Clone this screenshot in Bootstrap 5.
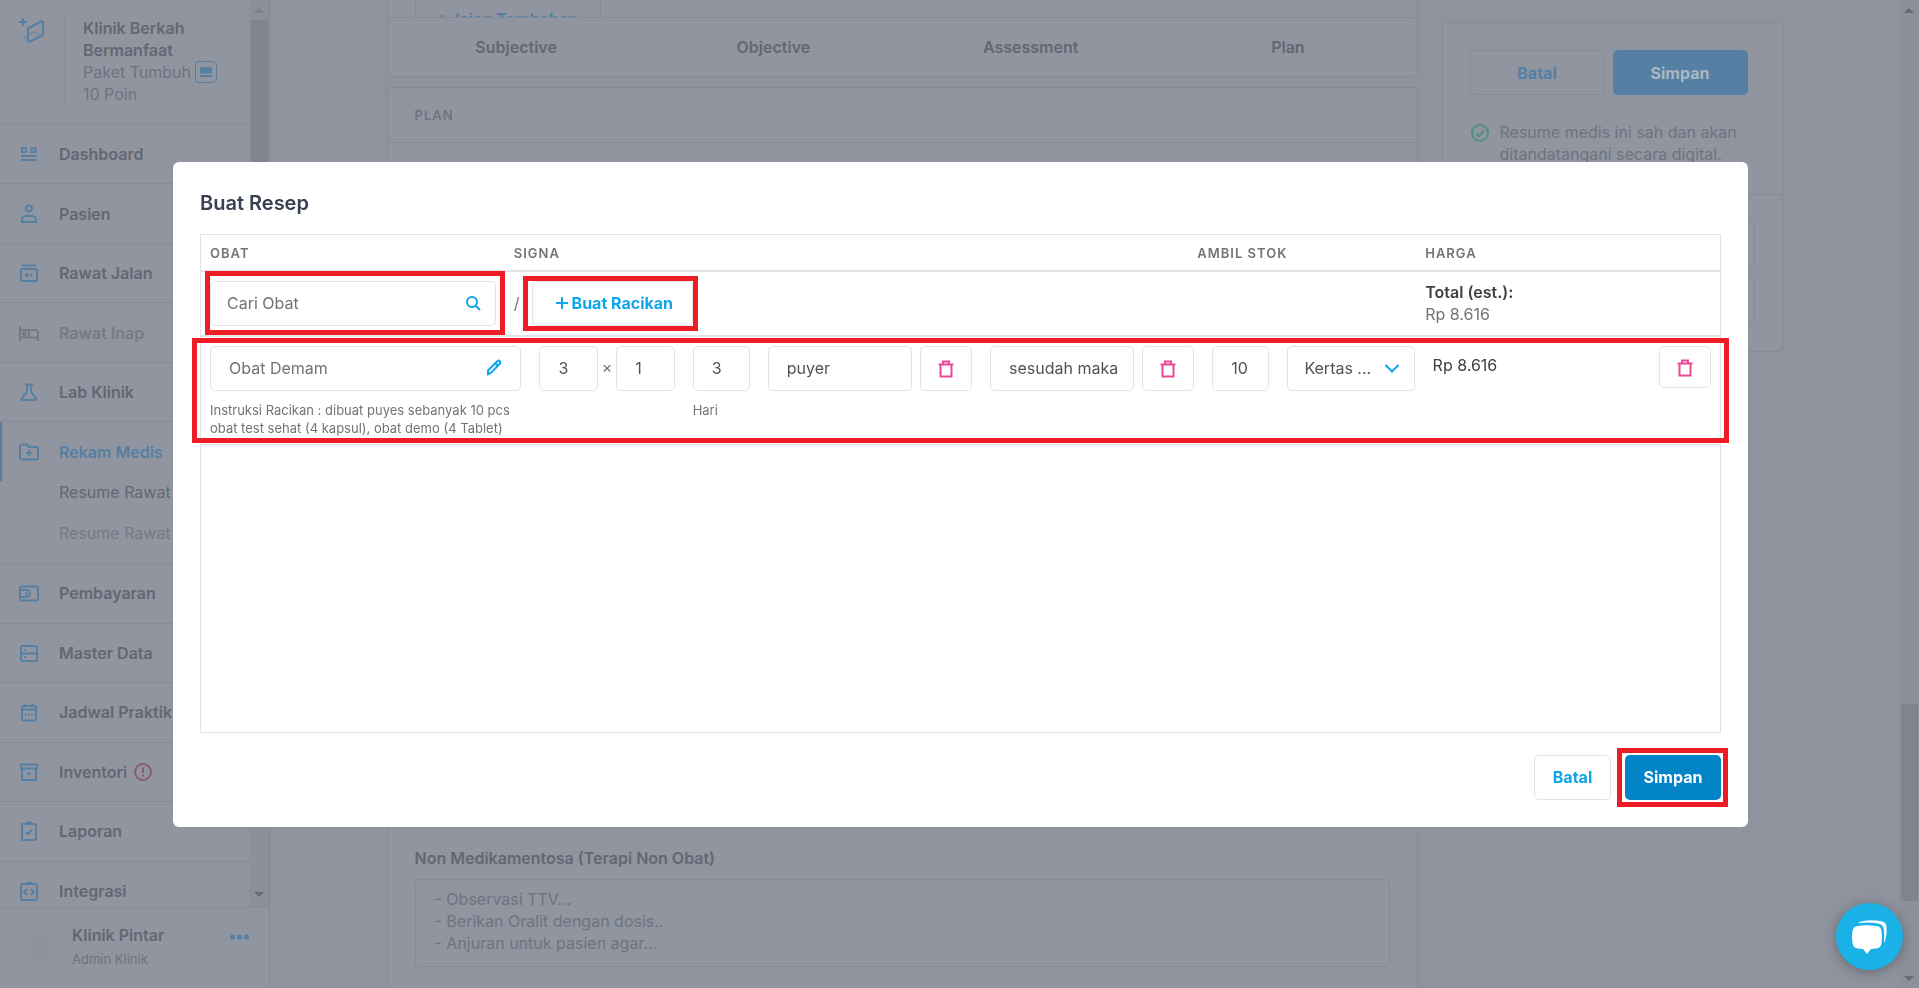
<!DOCTYPE html>
<html lang="id">
<head>
<meta charset="utf-8">
<meta name="viewport" content="width=device-width, initial-scale=1">
<title>Buat Resep</title>
<link href="https://cdn.jsdelivr.net/npm/bootstrap@5.3.0/dist/css/bootstrap.min.css" rel="stylesheet">
<style>
:root{--page:#8f939e;--panel:#9195a0;--line:#868a96;--ink:#636772;--mute:#6f737e;--blue:#557fa3;--edge:#e4e4e7;--accent:#0ea5e9;--mark-red:#ee1c25}
body{font:400 16px/22px Inter,"Liberation Sans",sans-serif;background:var(--page);color:var(--mute);overflow:hidden}
a{color:inherit;text-decoration:none}
.fw-semibold{font-weight:600!important}
.shell{height:100vh}
.ink{color:var(--ink)}
.blue{color:var(--blue)}
.ico{width:24px;height:24px;flex:none;fill:none;stroke:currentColor;stroke-width:2}

/* sidebar */
.sidebar{width:270px;flex:none;background:var(--panel);border-right:1px solid var(--line)}
.side-scroll{min-height:0}
.clinic{padding:17px 0 17px 17px;border-bottom:1px solid var(--line)}
.clinic-logo{width:29px;height:29px}
.clinic-name{border-left:1px solid #898d98;margin-left:18px;padding-left:18px;min-height:90px}
.crown{width:22px;height:22px;border:1px solid var(--blue);border-radius:4px;margin:-2px 0}
.menu{min-height:796px}
.menu>li{flex:1 0 59px;border-bottom:1px solid var(--line)}
.menu>li.open{flex-grow:0;flex-basis:140px}
.menu-link{height:100%;padding:0 17px;gap:18px}
.open .menu-link{height:59px;border-left:2px solid var(--blue);padding-left:15px}
.sub a{display:block;padding-left:59px;margin-bottom:19px;white-space:nowrap}
.dim{color:#767a85}
.faint{color:#858994}
.gap-6{gap:6px}
.user{height:82px;border-top:1px solid var(--line);padding:16px 20px 0 18px}
.avatar{width:41px;height:41px;background:#8f939e;border-radius:50%;color:#878b96;margin-top:6px}
.avatar .ico{stroke-width:1}
.user-name{padding-left:13px}
.tiny{font-size:13px;line-height:18px}
.bar{width:20px;flex:none;background:#8c909b;color:#666a75}
.bar i{display:block;width:17px;background:#80848f}
.bar svg{width:10px;height:5px;margin:8px 0 7px;fill:currentColor}
.bar-inner i{height:500px}
.bar-inner svg:first-child{color:#797d88}
.bar-inner svg:last-child{margin-bottom:10px}
.bar-page i{height:197px;margin-bottom:67px}

/* page behind the dialog */
.board{max-width:1396px;display:grid;grid-template-columns:minmax(0,1fr) 341px;gap:24px}
.panel{background:var(--panel);border:1px solid var(--line);border-radius:5px}
.extra{height:17px;border-width:0 1px;border-radius:0;padding-left:27px;overflow:hidden}
.extra .btn{margin-top:-3px;height:44px;width:186px}
.steps{height:60px}
.plan{margin-top:10px;border-radius:5px 5px 0 0;border-bottom:0}
.plan-head{padding:16px 27px;border-bottom:1px solid var(--line);letter-spacing:1px;font-size:13px}
.therapy{padding:704px 27px 21px}
.therapy label{margin-bottom:10px}
.note{display:block;width:100%;height:88px;background:transparent;border:1px solid var(--line);border-radius:5px;padding:8px 19px;color:var(--mute);resize:none;overflow:hidden}
.btn{border-radius:5px;line-height:22px;font-weight:700;font-size:16px;height:45px;padding:0 16px}
.btn-dim{border-color:var(--line);color:var(--blue)}
.btn-dimfill{background:var(--blue);color:#aab6c4}
.side-card{margin-top:22px}
.actions{padding:27px 34px 29px 27px}
.legal{margin-top:26px;gap:10px}
.legal svg{margin-top:2px;flex:none}
.side-boxes{padding:27px;border-top:1px solid var(--line);display:grid;gap:10px}
.side-box{height:46px;border:1px solid var(--line);border-radius:5px}

/* dialog */
.rx-modal{padding-left:2px}
.rx-dialog{max-width:1575px}
.rx{border:0;border-radius:6px;padding:27px}
.rx h1{font-size:20px;line-height:28px;font-weight:600;color:#374151;margin:0 0 17px}
.frame{border:1px solid var(--edge);min-height:499px}
.rx-table{table-layout:fixed;width:100%;color:#737373}
.rx-table th{padding:2px 9px 0;height:36px;font-size:13px;font-weight:600;letter-spacing:1px}
.rx-table td{padding:9px;border:2px solid var(--edge);border-width:2px 0}
.dark{color:#404040}
.field{position:relative}
.box{width:100%;height:45px;border:1px solid var(--edge);border-radius:5px;padding:0 14px 0 18px;background:#fff;color:#525252;font-size:16px;appearance:none;text-overflow:clip}
.box::placeholder{color:#737373;opacity:1}
.box-grey{color:#737373}
.field .ico{position:absolute;right:17px;top:50%;margin-top:-10px;width:20px;height:20px;color:var(--accent);pointer-events:none}
.field .ico-end{right:13px}
.btn-line{border:1px solid var(--edge);color:var(--accent);background:#fff}
.btn-line svg,.bin svg{width:20px;height:20px}
.mix{margin-left:12px}
.mix .btn{padding:0 19px}
.bin{border:1px solid var(--edge);color:#ec4899;background:#fff;width:52px;flex:none;padding:0}
.bin-low{height:42px}
.times{padding:10px 4px 0}
.dose{display:grid;gap:18px;grid-template-columns:minmax(0,311fr) minmax(0,135fr) minmax(0,57fr) minmax(0,204fr) minmax(0,204fr) minmax(0,57fr) minmax(0,127fr) minmax(0,278fr)}
.rx-table td.dose-cell{padding:9px 9px 7px;border-bottom-width:1px;border-top:0}
.hint{margin-top:10px;white-space:nowrap}
.outlined{position:relative}
.outlined::after{content:"";position:absolute;border:5px solid var(--mark-red);pointer-events:none;z-index:2}
.out-search::after{inset:-10px -9px -9px -5px}
.out-mix::after{inset:-5px -5px -5px -9px}
.out-row::after{inset:1px -9px 1px -9px}
.out-save::after{inset:-7px -7px -7px -8px}
.foot{gap:14px;margin-top:22px}
.save{background:#0284c7;color:#fff;width:96px}
.cancel{width:77px}
.chat{right:16px;bottom:18px;width:67px;height:67px;border:0;border-radius:50%;background:#1ab2e6;box-shadow:0 2px 12px rgba(0,0,0,.3);z-index:1060}
</style>
</head>
<body>
<div class="shell d-flex">
  <aside class="sidebar d-flex flex-column">
    <div class="side-scroll d-flex flex-grow-1 overflow-hidden">
      <div class="flex-grow-1">
        <div class="clinic d-flex">
          <svg class="ico clinic-logo blue" viewBox="0 0 29 29"><path d="M6 1v8M2 5h8" /><path d="M11 11.500 24 4.500q2-1 2 1v11q0 1.500-1.500 2.200L14 24q-3 1.500-3-1.500z"/><path d="M10 18 7 20.500l3 2M12 17.500l5-2.500 5 2" opacity=".45"/></svg>
          <div class="clinic-name">
            <div class="fw-semibold ink">Klinik Berkah<br>Bermanfaat</div>
            <div class="d-flex align-items-center">Paket Tumbuh
              <span class="crown blue d-inline-flex ms-1 align-items-center justify-content-center"><svg width="12" height="12" viewBox="0 0 12 12" fill="currentColor"><path d="M0 .5l2 1.500L4 .5l2 1.500L8 .5 10 2l2-1.500V7.500H0zM0 9h12v2H0z"/></svg></span></div>
            <div>10 Poin</div>
          </div>
        </div>
        <ul class="menu list-unstyled d-flex flex-column mb-0 fw-semibold ink">
          <li><a href="#" class="menu-link d-flex align-items-center"><svg class="ico blue" viewBox="0 0 24 24"><path d="M5 6h4v4H5zM14.500 6h4v4h-4zM4 14h16M4 18h16"/></svg>Dashboard</a></li>
          <li><a href="#" class="menu-link d-flex align-items-center"><svg class="ico blue" viewBox="0 0 24 24"><circle cx="12" cy="6.500" r="3"/><path d="M5 20v-2q0-4 5-4h4q5 0 5 4v2z"/></svg>Pasien</a></li>
          <li><a href="#" class="menu-link d-flex align-items-center"><svg class="ico blue" viewBox="0 0 24 24"><rect x="4" y="8" width="16" height="12" rx="1.500"/><path d="M5 4.500h14"/><circle cx="10" cy="14" r="1.500" fill="currentColor" stroke-width="1"/><path d="M14.500 12v4"/></svg>Rawat Jalan</a></li>
          <li><a href="#" class="menu-link dim d-flex align-items-center"><svg class="ico" viewBox="0 0 24 24"><path d="M3 5v15M3 16.500h19M21 20v-9q0-2-2-2h-7v7M3 9h9"/><circle cx="7.500" cy="12.500" r="1.500"/></svg>Rawat Inap</a></li>
          <li><a href="#" class="menu-link d-flex align-items-center"><svg class="ico blue" viewBox="0 0 24 24"><path d="M8 4.500h8M10 5v7l-5 6q-1 2 1 2h12q2 0 1-2l-5-6V5"/></svg>Lab Klinik</a></li>
          <li class="open"><a href="#" class="menu-link blue d-flex align-items-center"><svg class="ico" viewBox="0 0 24 24"><path d="M3 18V6q0-1.500 1.500-1.500H10l2 2.500h7.500Q21 7 21 8.500V18q0 1.500-1.500 1.500h-15Q3 19.500 3 18zM12 10v6M9 13h6"/></svg>Rekam Medis</a>
            <div class="sub fw-normal"><a href="#" class="ink">Resume Rawat Jalan</a><a href="#" class="dim">Resume Rawat Inap</a></div></li>
          <li><a href="#" class="menu-link d-flex align-items-center"><svg class="ico blue" viewBox="0 0 24 24"><rect x="3" y="5.500" width="18" height="14" rx="1"/><path d="M3 9h6.500a3.500 3.500 0 0 1 0 7H3"/><circle cx="9.500" cy="12.500" r=".5"/></svg>Pembayaran</a></li>
          <li><a href="#" class="menu-link d-flex align-items-center"><svg class="ico blue" viewBox="0 0 24 24"><rect x="4" y="5" width="16" height="15" rx="1.500"/><path d="M4 12.500h16M7 9h2M7 16h2"/></svg>Master Data</a></li>
          <li><a href="#" class="menu-link d-flex align-items-center"><svg class="ico blue" viewBox="0 0 24 24"><rect x="5" y="6" width="14" height="14.500" rx="1.500"/><path d="M5 9.500h14M8.500 3.500v3M15.500 3.500v3M8 14.500h2M11 14.500h2M14 14.500h2"/></svg>Jadwal Praktik</a></li>
          <li><a href="#" class="menu-link d-flex align-items-center"><svg class="ico blue" viewBox="0 0 24 24"><path d="M4 4.500h16v4H4zM5 8.500V20h14V8.500M10 13.500h4"/></svg><span class="d-flex align-items-center gap-6">Inventori<svg width="20" height="20" viewBox="0 0 20 20" fill="none" stroke="#8b5878" stroke-width="2"><circle cx="10" cy="10" r="8"/><path d="M10 5.500v5.500M10 12.500v2"/></svg></span></a></li>
          <li><a href="#" class="menu-link d-flex align-items-center"><svg class="ico blue" viewBox="0 0 24 24"><rect x="5" y="5" width="14" height="16" rx="1"/><path d="M9 4h6" stroke-width="3"/><path d="M9 13l2 2 4-4"/></svg>Laporan<svg class="ms-auto me-2 faint" width="14" height="8" viewBox="0 0 14 8" fill="none" stroke="currentColor"><path d="M1 1l6 6 6-6"/></svg></a></li>
          <li><a href="#" class="menu-link d-flex align-items-center"><svg class="ico blue" viewBox="0 0 24 24"><rect x="4" y="5" width="16" height="16" rx="1"/><path d="M9 4h6M10 10l-3 3 3 3M14 10l3 3-3 3"/></svg>Integrasi<svg class="ms-auto me-2 faint" width="14" height="8" viewBox="0 0 14 8" fill="none" stroke="currentColor"><path d="M1 1l6 6 6-6"/></svg></a></li>
        </ul>
      </div>
      <div class="bar bar-inner d-flex flex-column align-items-center"><svg viewBox="0 0 10 5"><path d="M0 5l5-5 5 5z"/></svg><i></i><svg class="mt-auto" viewBox="0 0 10 5"><path d="M0 0l5 5 5-5z"/></svg></div>
    </div>
    <div class="user d-flex align-items-start">
      <span class="avatar d-flex align-items-center justify-content-center"><svg class="ico" viewBox="0 0 24 24"><circle cx="12" cy="6.500" r="2.500"/><path d="M5 17v-2q0-3 5-3h4q5 0 5 3v2z"/></svg></span>
      <div class="user-name flex-grow-1"><div class="fw-semibold ink mb-1">Klinik Pintar</div><div class="tiny">Admin Klinik</div></div>
      <button type="button" class="btn p-0 border-0 h-auto blue" aria-label="Menu akun"><svg width="19" height="6" viewBox="0 0 19 6" fill="currentColor"><circle cx="2.500" cy="3" r="2.500"/><circle cx="9.500" cy="3" r="2.500"/><circle cx="16.500" cy="3" r="2.500"/></svg></button>
    </div>
  </aside>

  <main class="flex-grow-1 px-4 overflow-hidden">
    <div class="board mx-auto">
      <div>
        <div class="panel extra"><button type="button" class="btn btn-dim p-0">+&nbsp; Isian Tambahan</button></div>
        <nav class="panel steps d-flex align-items-center text-center fw-semibold ink">
          <a href="#" class="col-3">Subjective</a><a href="#" class="col-3">Objective</a><a href="#" class="col-3">Assessment</a><a href="#" class="col-3">Plan</a>
        </nav>
        <section class="panel plan">
          <div class="plan-head fw-semibold">PLAN</div>
          <div class="therapy">
            <label for="note" class="fw-semibold ink d-block">Non Medikamentosa (Terapi Non Obat)</label>
            <textarea id="note" class="note">- Observasi TTV...
- Berikan Oralit dengan dosis..
- Anjuran untuk pasien agar...</textarea>
          </div>
        </section>
      </div>
      <div>
        <section class="panel side-card">
          <div class="actions">
            <div class="d-flex gap-2"><button type="button" class="btn btn-dim w-50">Batal</button><button type="button" class="btn btn-dimfill w-50">Simpan</button></div>
            <div class="legal d-flex"><svg width="20" height="20" viewBox="0 0 20 20" fill="none" stroke="#54907d" stroke-width="2"><circle cx="10" cy="10" r="8"/><path d="M6.500 10.500l2.500 2.500 5-5.500"/></svg><span>Resume medis ini sah dan akan<br>ditandatangani secara digital.</span></div>
          </div>
          <div class="side-boxes"><div class="side-box"></div><div class="side-box"></div></div>
        </section>
      </div>
    </div>
  </main>
  <div class="bar bar-page d-flex flex-column align-items-center"><svg viewBox="0 0 10 5"><path d="M0 5l5-5 5 5z"/></svg><i class="mt-auto"></i><svg viewBox="0 0 10 5"><path d="M0 0l5 5 5-5z"/></svg></div>
</div>

<div class="modal rx-modal d-block overflow-hidden" role="dialog" aria-labelledby="rxTitle">
  <div class="modal-dialog modal-dialog-centered rx-dialog">
    <form class="modal-content rx">
      <h1 id="rxTitle">Buat Resep</h1>
      <div class="frame">
        <table class="rx-table">
          <colgroup><col style="width:20%"><col style="width:45%"><col style="width:15%"><col style="width:20%"></colgroup>
          <thead><tr><th>OBAT</th><th>SIGNA</th><th>AMBIL STOK</th><th>HARGA</th></tr></thead>
          <tbody>
            <tr>
              <td><div class="field outlined out-search"><input class="box ps-3" type="text" placeholder="Cari Obat" aria-label="Cari Obat"><svg class="ico ico-end" viewBox="0 0 20 20"><circle cx="9" cy="9" r="5"/><path d="M12.500 12.500l4.500 4.500"/></svg></div></td>
              <td><div class="d-flex align-items-center">/<span class="outlined out-mix mix d-flex"><button type="button" class="btn btn-line d-flex align-items-center"><svg viewBox="0 0 20 20" fill="none" stroke="currentColor" stroke-width="2"><path d="M10 4v12M4 10h12"/></svg>Buat Racikan</button></span></div></td>
              <td></td>
              <td><div class="fw-semibold dark">Total (est.):</div>Rp 8.616</td>
            </tr>
            <tr>
              <td colspan="4" class="dose-cell outlined out-row">
                <div class="dose">
                  <div><div class="field"><input class="box box-grey" type="text" value="Obat Demam" aria-label="Obat"><svg class="ico" viewBox="0 0 20 20"><path d="M4 16v-3.500L13.500 3q1.200-.8 2.300.2t.2 2.300L6.800 15 4 16.200zM11.500 5.500l2.500 2.500"/></svg></div>
                    <div class="tiny hint">Instruksi Racikan : dibuat puyes sebanyak 10 pcs<br>obat test sehat (4 kapsul), obat demo (4 Tablet)</div></div>
                  <div class="d-flex align-items-start"><input class="box" type="text" value="3" aria-label="Kali"><span class="times">×</span><input class="box" type="text" value="1" aria-label="Dosis"></div>
                  <div><input class="box" id="hari" type="text" value="3"><label for="hari" class="tiny hint d-block">Hari</label></div>
                  <div class="d-flex gap-2"><input class="box" type="text" value="puyer" aria-label="Satuan"><button type="button" class="btn bin" aria-label="Hapus satuan"><svg viewBox="0 0 20 20" fill="none" stroke="currentColor" stroke-width="2"><path d="M2.500 5.500h15M4.500 6v11.500h11V6M7 5V2.500h6V5"/></svg></button></div>
                  <div class="d-flex gap-2"><input class="box" type="text" value="sesudah maka" aria-label="Aturan"><button type="button" class="btn bin" aria-label="Hapus aturan"><svg viewBox="0 0 20 20" fill="none" stroke="currentColor" stroke-width="2"><path d="M2.500 5.500h15M4.500 6v11.500h11V6M7 5V2.500h6V5"/></svg></button></div>
                  <div><input class="box" type="text" value="10" aria-label="Jumlah"></div>
                  <div><div class="field"><select class="box ps-3" aria-label="Kemasan"><option>Kertas ...</option></select><svg class="ico ico-end" viewBox="0 0 20 20"><path d="M3.500 7l6.500 6.500L16.500 7"/></svg></div></div>
                  <div class="d-flex justify-content-between align-items-start"><span class="dark pt-2">Rp 8.616</span><button type="button" class="btn bin bin-low" aria-label="Hapus obat"><svg viewBox="0 0 20 20" fill="none" stroke="currentColor" stroke-width="2"><path d="M2.500 5.500h15M4.500 6v11.500h11V6M7 5V2.500h6V5"/></svg></button></div>
                </div>
              </td>
            </tr>
          </tbody>
        </table>
      </div>
      <div class="foot d-flex justify-content-end">
        <button type="button" class="btn btn-line cancel">Batal</button>
        <span class="outlined out-save d-flex"><button type="submit" class="btn save">Simpan</button></span>
      </div>
    </form>
  </div>
</div>
<button type="button" class="chat position-fixed p-0" aria-label="Obrolan"><svg width="37" height="36" viewBox="0 0 37 36" fill="#fff"><path d="M7 7q8-1.500 18 0 5 0 5.500 5 1 6 0 12-.5 5-5.500 5.500l-5 .5-4 5-4-5-5-.500Q2 29 1.500 24q-1-6 0-12Q2 7.500 7 7z"/><path d="M8 3q11-3 23-.5 4 .5 4.500 5 .8 8-1.500 15l-1 1q.5-7 0-12.500-.5-6-7-6.800Q16 3 8 4z"/></svg></button>
<script src="https://cdn.jsdelivr.net/npm/bootstrap@5.3.0/dist/js/bootstrap.bundle.min.js"></script>
</body>
</html>
